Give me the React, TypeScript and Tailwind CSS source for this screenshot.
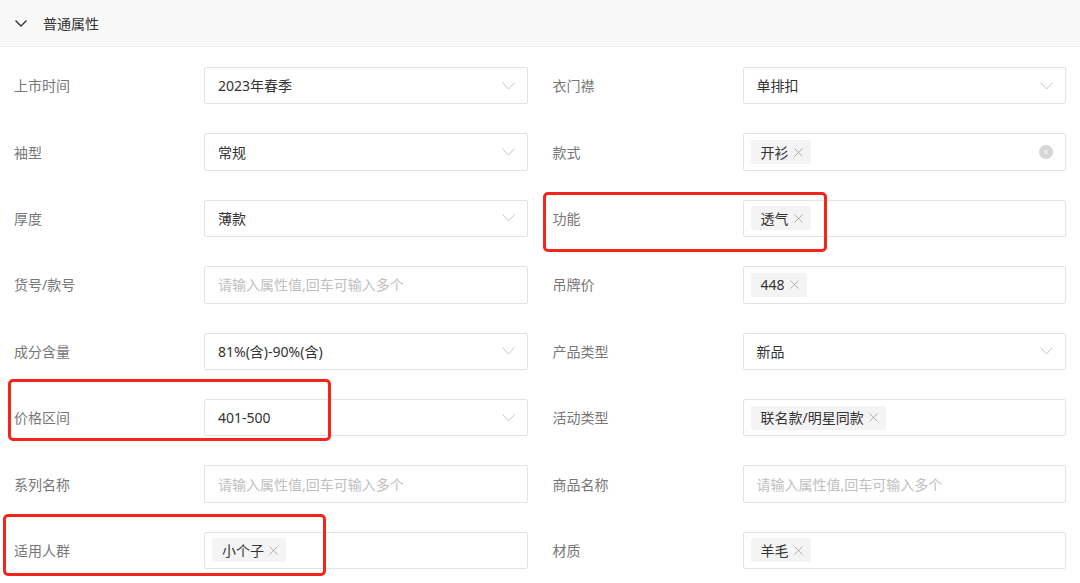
import { X } from "lucide-react";

type Field =
  | { label: string; kind: "select"; value: string }
  | { label: string; kind: "tags"; tags: string[]; clearable?: boolean }
  | { label: string; kind: "input" };

const PLACEHOLDER = "请输入属性值,回车可输入多个";

// rows, left then right
const rows: [Field, Field][] = [
  [
    { label: "上市时间", kind: "select", value: "2023年春季" },
    { label: "衣门襟", kind: "select", value: "单排扣" },
  ],
  [
    { label: "袖型", kind: "select", value: "常规" },
    { label: "款式", kind: "tags", tags: ["开衫"], clearable: true },
  ],
  [
    { label: "厚度", kind: "select", value: "薄款" },
    { label: "功能", kind: "tags", tags: ["透气"] },
  ],
  [
    { label: "货号/款号", kind: "input" },
    { label: "吊牌价", kind: "tags", tags: ["448"] },
  ],
  [
    { label: "成分含量", kind: "select", value: "81%(含)-90%(含)" },
    { label: "产品类型", kind: "select", value: "新品" },
  ],
  [
    { label: "价格区间", kind: "select", value: "401-500" },
    { label: "活动类型", kind: "tags", tags: ["联名款/明星同款"] },
  ],
  [
    { label: "系列名称", kind: "input" },
    { label: "商品名称", kind: "input" },
  ],
  [
    { label: "适用人群", kind: "tags", tags: ["小个子"] },
    { label: "材质", kind: "tags", tags: ["羊毛"] },
  ],
];

const Caret = ({ color = "#c6c6c6", w = 13, h = 8, sw = 1 }) => (
  <svg width={w} height={h} viewBox={`0 0 ${w} ${h}`} className="shrink-0">
    <path
      d={`M0.5 0.5 L${w / 2} ${h - 1} L${w - 0.5} 0.5`}
      fill="none"
      stroke={color}
      strokeWidth={sw}
    />
  </svg>
);

const FieldBox = ({ field }: { field: Field }) => {
  const box =
    "flex h-[37.4px] flex-1 items-center rounded-[2px] border border-[#e3e3e3] bg-white";
  if (field.kind === "select") {
    return (
      <div className={`${box} pl-[13px] pr-[12px]`}>
        <span className="flex-1 text-[14px] text-[#333]">{field.value}</span>
        <Caret />
      </div>
    );
  }
  if (field.kind === "input") {
    return (
      <div className={`${box} pl-[13px]`}>
        <span className="text-[14px] text-[#c0c0c0]">{PLACEHOLDER}</span>
      </div>
    );
  }
  return (
    <div className={`${box} pl-[7px] pr-[12px]`}>
      <div className="flex flex-1 gap-1">
        {field.tags.map((t) => (
          <span
            key={t}
            className="flex h-[24px] items-center gap-[2px] rounded-[2px] bg-[#f4f4f4] pl-[10px] pr-[5px] text-[14px] text-[#333]"
          >
            {t}
            <X size={15} strokeWidth={1.2} className="text-[#999]" />
          </span>
        ))}
      </div>
      {field.clearable && (
        <span className="flex h-[14px] w-[14px] items-center justify-center rounded-full bg-[#d6d6d6]">
          <X size={8} strokeWidth={2.5} className="text-white" />
        </span>
      )}
    </div>
  );
};

const Mark = ({ className }: { className: string }) => (
  <div
    className={`pointer-events-none absolute rounded-[5px] border-[3px] border-[#f7241c] ${className}`}
  />
);

export default function App() {
  return (
    <div
      className="relative h-[583px] w-[1080px] overflow-hidden bg-white"
      style={{ fontFamily: '"Noto Sans", "Noto Sans CJK SC", sans-serif' }}
    >
      <div className="flex h-[47px] items-center gap-[16px] border-b border-[#ececec] bg-[#f8f8f8] pl-[15px]">
        <Caret color="#333" w={12} h={7} sw={1.4} />
        <span className="text-[14px] text-[#333]">普通属性</span>
      </div>

      <div className="grid grid-cols-2 gap-x-[25px] gap-y-[29px] px-[14px] pt-[20px]">
        {rows.flatMap((pair, i) =>
          pair.map((f, j) => (
            <div key={`${i}-${j}`} className="flex items-center">
              <span className="w-[190px] shrink-0 text-[14px] text-[#777]">
                {f.label}
              </span>
              <FieldBox field={f} />
            </div>
          ))
        )}
      </div>

      <Mark className="left-[543px] top-[192px] h-[60px] w-[284px]" />
      <Mark className="left-[8px] top-[379px] h-[62px] w-[323px]" />
      <Mark className="left-[3px] top-[514px] h-[62px] w-[323px]" />
    </div>
  );
}
